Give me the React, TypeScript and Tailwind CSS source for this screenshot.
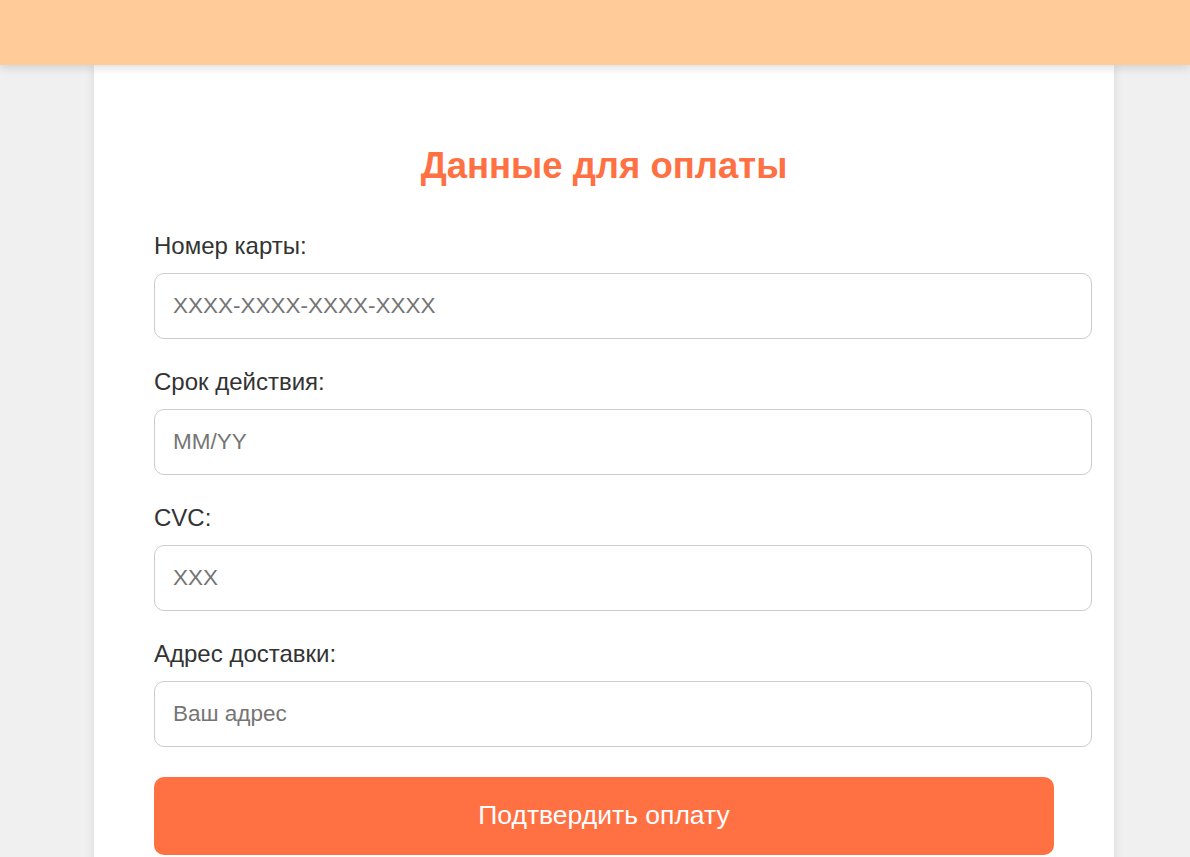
export default function App() {
  const fields = [
    { label: "Номер карты:", placeholder: "XXXX-XXXX-XXXX-XXXX" },
    { label: "Срок действия:", placeholder: "MM/YY" },
    { label: "CVC:", placeholder: "XXX" },
    { label: "Адрес доставки:", placeholder: "Ваш адрес" },
  ];

  return (
    <div className="h-[857px] overflow-hidden bg-[#f0f0f0] font-['Liberation_Sans',Arial,sans-serif]">
      <header className="relative z-10 h-[65px] bg-[#ffcc99] shadow-[0_2px_10px_rgba(0,0,0,0.15)]" />

      <main className="ml-[94px] w-[1020px] bg-white px-[60px] pt-[80px] pb-10 shadow-[0_0_10px_rgba(0,0,0,0.1)]">
        <h2 className="text-center text-[36.5px] leading-[42px] font-bold text-[#ff7043]">
          Данные для оплаты
        </h2>

        <form className="mt-[48px] flex flex-col gap-[32px]" onSubmit={(e) => e.preventDefault()}>
          {fields.map((f) => (
            <div key={f.label}>
              <label className="block text-[24px] leading-[21px] text-[#333]">{f.label}</label>
              <input
                type="text"
                placeholder={f.placeholder}
                className="mt-[17px] block h-[66px] w-[938px] rounded-[10px] border border-[#ccc] px-[18px] text-[22.5px] text-[#333] placeholder:text-[#757575] outline-none"
              />
            </div>
          ))}

          <button
            type="submit"
            className="-mt-[2px] block h-[78px] w-[900px] rounded-[10px] bg-[#ff7043] text-[26.5px] text-white"
          >
            Подтвердить оплату
          </button>
        </form>
      </main>
    </div>
  );
}
